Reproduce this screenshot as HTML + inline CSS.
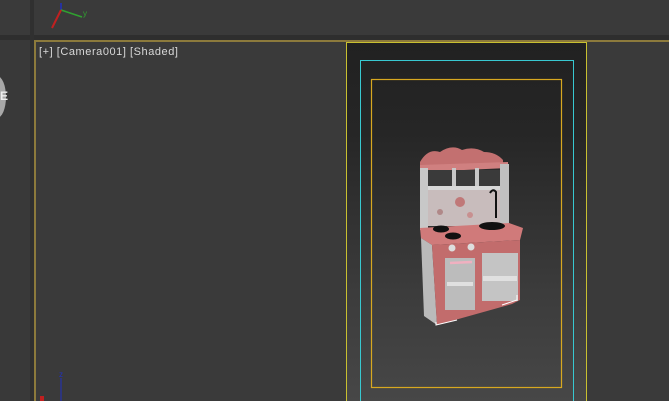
<!DOCTYPE html>
<html style="overflow:hidden;width:669px;height:401px"><head><style>
html,body{margin:0;width:669px;height:401px;overflow:hidden}
body{background:#393939;position:relative;font-family:"Liberation Sans",sans-serif}
div{position:absolute;box-sizing:border-box}
</style></head><body>
<div style="left:0;top:0;width:669px;height:35px;background:#3a3a3a"></div>
<div style="left:0;top:35px;width:669px;height:5px;background:#2e2e2e"></div>
<div style="left:30px;top:0;width:4px;height:401px;background:#303030"></div>
<div style="left:34px;top:40px;width:635px;height:361px;border-left:2px solid #8c7a3c;border-top:2px solid #8c7a3c;background:#3a3a3a"></div>
<div style="left:-12px;top:76px;width:18px;height:42px;border-radius:50%;background:#a8a8a8"></div>
<div style="left:0;top:89px;font-size:12px;font-weight:bold;color:#eee">E</div>
<div style="left:39px;top:46px;font-size:11px;color:#d8d8d8;white-space:nowrap;letter-spacing:0.55px">[+] [Camera001] [Shaded]</div>
<div style="left:346px;top:42px;width:241px;height:359px;border:1px solid #c8c030;border-bottom:none;background:linear-gradient(#212121,#262626 25%,#3c3c3c 70%,#474747)"></div>
<div style="left:360px;top:60px;width:214px;height:341px;border:1px solid #38c8d0;border-bottom:none"></div>
<svg style="position:absolute;left:0;top:0" width="669" height="401">
<rect x="371.5" y="79.5" width="190" height="308" fill="none" stroke="#d8a820" stroke-width="1.2"/>
<line x1="61" y1="10" x2="61" y2="3" stroke="#2030c0" stroke-width="1.5"/>
<line x1="61" y1="10" x2="82" y2="17" stroke="#30a030" stroke-width="1.5"/>
<text x="83" y="16" font-size="8" fill="#30a030">y</text>
<line x1="61" y1="10" x2="52" y2="28" stroke="#c02020" stroke-width="2"/>
<line x1="61" y1="401" x2="61" y2="378" stroke="#2030c0" stroke-width="1"/>
<text x="59" y="377" font-size="8" fill="#2030c0">z</text>
<rect x="40" y="396" width="4" height="5" fill="#c02020"/>
<path d="M420 162 Q428 148 440 152 Q452 144 462 150 Q474 146 484 152 Q496 152 503 160 L503 166 L420 168Z" fill="#c37070"/>
<path d="M420 165 L508 162 L508 168 L420 172Z" fill="#d08080"/>
<rect x="420" y="168" width="8" height="62" fill="#c8c8c8"/>
<rect x="500" y="164" width="9" height="64" fill="#c0c0c0"/>
<rect x="428" y="170" width="72" height="16" fill="#3a3a3a"/>
<rect x="452" y="168" width="4" height="20" fill="#c8c8c8"/>
<rect x="475" y="168" width="4" height="20" fill="#c8c8c8"/>
<rect x="428" y="186" width="72" height="4" fill="#d8d8d8"/>
<rect x="428" y="190" width="72" height="36" fill="#c8bcbc"/>
<circle cx="460" cy="202" r="5" fill="#c07878"/><circle cx="440" cy="212" r="3" fill="#b08888"/><circle cx="470" cy="215" r="3" fill="#c89090"/>
<path d="M496 218 L496 192 Q493 188 490 193" stroke="#111" stroke-width="2" fill="none"/>
<path d="M420 228 L509 223 L523 228 L520 240 L432 245 L421 238Z" fill="#d07a7a"/>
<ellipse cx="441" cy="229" rx="8" ry="3.5" fill="#111"/><ellipse cx="453" cy="236" rx="8" ry="3.5" fill="#111"/>
<ellipse cx="492" cy="226" rx="13" ry="4" fill="#111"/>
<path d="M421 238 L432 245 L437 325 L424 316Z" fill="#bababa"/>
<path d="M432 245 L520 240 L520 300 L512 304 L437 325Z" fill="#c26c6c"/>
<rect x="445" y="258" width="30" height="52" fill="#bcbcbc"/>
<rect x="447" y="282" width="26" height="4" fill="#e0e0e0"/>
<rect x="482" y="253" width="36" height="48" fill="#c4c4c4"/>
<rect x="483" y="276" width="34" height="5" fill="#e0e0e0"/>
<circle cx="452" cy="248" r="3.5" fill="#ddd"/><circle cx="471" cy="247" r="3.5" fill="#ddd"/>
<path d="M450 263 L472 262" stroke="#f0b0c0" stroke-width="2.5"/>
<path d="M436 322 L436 325 L457 320 M502 305 L517 300 L517 295" stroke="#fff" stroke-width="1" fill="none"/>
</svg>
</body></html>
